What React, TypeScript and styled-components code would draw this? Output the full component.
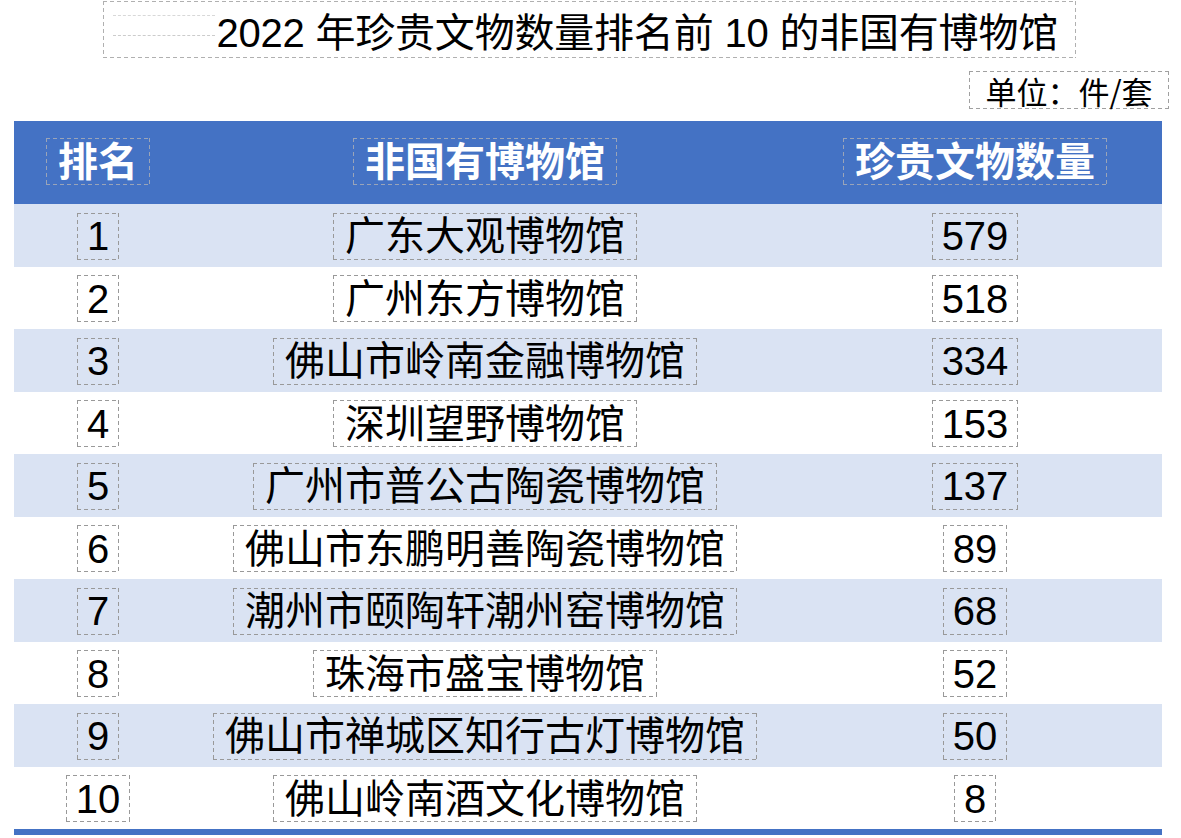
import styled, { createGlobalStyle, css } from "styled-components";

const GlobalStyle = createGlobalStyle`
  html, body {
    margin: 0;
    padding: 0;
    background: #ffffff;
  }
  body {
    font-family: "Liberation Sans", "Noto Sans CJK SC", sans-serif;
    color: #000000;
  }
`;

// PowerPoint-style dashed text-box outline (4px dash, 3px gap)
const dashed = (c: string) => css`
  background-image: repeating-linear-gradient(90deg, ${c} 0 4px, transparent 4px 7px),
    repeating-linear-gradient(90deg, ${c} 0 4px, transparent 4px 7px),
    repeating-linear-gradient(180deg, ${c} 0 4px, transparent 4px 7px),
    repeating-linear-gradient(180deg, ${c} 0 4px, transparent 4px 7px);
  background-size: 100% 1px, 100% 1px, 1px 100%, 1px 100%;
  background-position: 0 0, 0 100%, 0 0, 100% 0;
  background-repeat: no-repeat;
`;

const Page = styled.div`
  width: 1181px;
  height: 838px;
  display: flex;
  flex-direction: column;
  overflow: hidden;
`;

const TitleBox = styled.div`
  position: relative;
  margin: 1px 0 0 103px;
  width: 973px;
  height: 57px;
  box-sizing: border-box;
  ${dashed("#b0b0b0")}
  display: flex;
  align-items: center;
  justify-content: flex-end;
  padding-right: 18px;
  font-size: 40px;
  letter-spacing: -0.2px;
  white-space: nowrap;
`;

// faint leftover text-box outline sitting inside the title frame
const GhostFrame = styled.div`
  position: absolute;
  left: 10px;
  top: 14px;
  width: 102px;
  height: 19px;
  border-top: 1px dashed #d8d8d8;
  border-bottom: 1px dashed #cccccc;
`;

const UnitRow = styled.div`
  display: flex;
  justify-content: flex-end;
  padding-right: 12px;
  margin-top: 13px;
`;

const UnitBox = styled.div`
  height: 38px;
  width: 200px;
  box-sizing: border-box;
  ${dashed("#a0a0a0")}
  display: flex;
  align-items: center;
  justify-content: center;
  font-family: "Noto Sans CJK SC", sans-serif;
  font-size: 31px;
  line-height: 1;
  white-space: nowrap;
`;

const Table = styled.div`
  margin: 12px 0 0 14px;
  width: 1148px;
  display: flex;
  flex-direction: column;
`;

const Row = styled.div<{ $head?: boolean; $shade?: boolean }>`
  display: grid;
  grid-template-columns: 168px 606px 374px;
  height: ${({ $head }) => ($head ? "83px" : "62.5px")};
  background: ${({ $head, $shade }) =>
    $head ? "#4472c4" : $shade ? "#dae3f3" : "#ffffff"};
  color: ${({ $head }) => ($head ? "#ffffff" : "#000000")};
  font-weight: ${({ $head }) => ($head ? 700 : 400)};
`;

const Cell = styled.div`
  display: flex;
  align-items: center;
  justify-content: center;
`;

const TextBox = styled.div<{ $num?: boolean; $head?: boolean }>`
  height: 47px;
  box-sizing: border-box;
  ${({ $head }) => dashed($head ? "#9aa4b8" : "#999999")}
  padding: ${({ $num }) => ($num ? "0 10px" : "0 12px")};
  margin-top: ${({ $head }) => ($head ? "-2px" : "2px")};
  display: flex;
  align-items: center;
  font-size: 40px;
  line-height: 1;
  white-space: nowrap;
`;

const BottomRule = styled.div`
  height: 6px;
  background: #4472c4;
`;

const museums: [string, string, string][] = [
  ["1", "广东大观博物馆", "579"],
  ["2", "广州东方博物馆", "518"],
  ["3", "佛山市岭南金融博物馆", "334"],
  ["4", "深圳望野博物馆", "153"],
  ["5", "广州市普公古陶瓷博物馆", "137"],
  ["6", "佛山市东鹏明善陶瓷博物馆", "89"],
  ["7", "潮州市颐陶轩潮州窑博物馆", "68"],
  ["8", "珠海市盛宝博物馆", "52"],
  ["9", "佛山市禅城区知行古灯博物馆", "50"],
  ["10", "佛山岭南酒文化博物馆", "8"],
];

export default function App() {
  return (
    <Page>
      <GlobalStyle />
      <TitleBox>
        <GhostFrame />
        2022 年珍贵文物数量排名前 10 的非国有博物馆
      </TitleBox>
      <UnitRow>
        <UnitBox>单位：件/套</UnitBox>
      </UnitRow>
      <Table>
        <Row $head>
          <Cell>
            <TextBox $head>排名</TextBox>
          </Cell>
          <Cell>
            <TextBox $head>非国有博物馆</TextBox>
          </Cell>
          <Cell>
            <TextBox $head>珍贵文物数量</TextBox>
          </Cell>
        </Row>
        {museums.map(([rank, name, count], i) => (
          <Row key={rank} $shade={i % 2 === 0}>
            <Cell>
              <TextBox $num>{rank}</TextBox>
            </Cell>
            <Cell>
              <TextBox>{name}</TextBox>
            </Cell>
            <Cell>
              <TextBox $num>{count}</TextBox>
            </Cell>
          </Row>
        ))}
        <BottomRule />
      </Table>
    </Page>
  );
}
